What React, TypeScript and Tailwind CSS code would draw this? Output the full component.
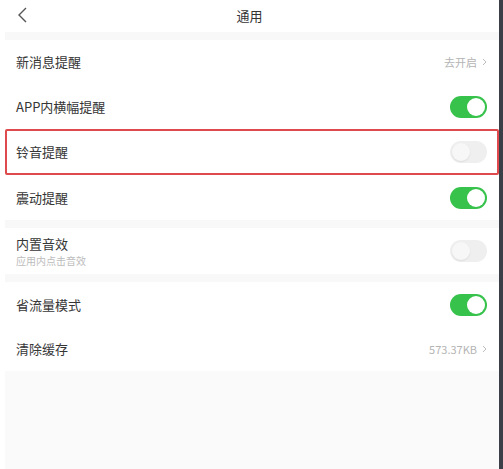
const font = "font-['Noto_Sans_CJK_SC','Noto_Sans',sans-serif]";

type RowProps = {
  label: string;
  sub?: string;
  right?: React.ReactNode;
  className?: string;
};

const Toggle = ({ on }: { on: boolean }) =>
  on ? (
    <div className="w-[37px] h-[22px] rounded-full bg-[#36c24b] flex items-center justify-end pr-[2px]">
      <div className="w-[18px] h-[18px] rounded-full bg-white" />
    </div>
  ) : (
    <div className="w-[37px] h-[22px] rounded-full bg-[#efefef] flex items-center pl-[2px]">
      <div className="w-[18px] h-[18px] rounded-full bg-[#f7f7f7] shadow-[0_1px_2px_rgba(0,0,0,0.08)]" />
    </div>
  );

const Link = ({ text }: { text: string }) => (
  <div className="flex items-center gap-[5px] text-[11px] text-[#b4b4b4]">
    <span>{text}</span>
    <svg width="5" height="8" viewBox="0 0 5 8" fill="none">
      <path d="M1 1l3 3-3 3" stroke="#bdbdbd" strokeWidth="1" />
    </svg>
  </div>
);

// padding lives in className so the ringed row can shift it by the border width
const Row = ({ label, sub, right, className }: RowProps) => (
  <div className={`flex items-center justify-between ${className ?? "h-[45px] pl-[11px] pr-[12px]"}`}>
    <div className="flex flex-col">
      <span className="text-[13px] text-[#363636] leading-[18px]">{label}</span>
      {sub && <span className="text-[10px] text-[#bcbcbc] leading-[12px] mt-[2px]">{sub}</span>}
    </div>
    {right}
  </div>
);

const Gap = () => <div className="h-[8px] bg-[#f8f8f8]" />;

const App = () => {
  return (
    <div className={`${font} w-[503px] h-[469px] bg-white flex overflow-hidden`}>
      <div className="flex-1 flex flex-col pl-[5px]">
        {/* header */}
        <div className="h-[32px] flex items-center relative -ml-[5px]">
          <svg className="absolute left-[17px] top-[6px]" width="11" height="18" viewBox="0 0 11 18" fill="none">
            <path d="M9 2L2 9l7 7" stroke="#555" strokeWidth="1.4" />
          </svg>
          <div className="flex-1 text-center text-[13px] text-[#333]">通用</div>
        </div>
        <Gap />

        <Row label="新消息提醒" className="h-[44px] pl-[11px] pr-[12px]" right={<Link text="去开启" />} />
        <Row label="APP内横幅提醒" right={<Toggle on />} />
        <Row
          label="铃音提醒"
          className="h-[46px] border-2 border-[#de4a4e] rounded-[2px] pl-[9px] pr-[10px]"
          right={<Toggle on={false} />}
        />
        <Row label="震动提醒" right={<Toggle on />} />
        <Gap />

        <Row
          label="内置音效"
          sub="应用内点击音效"
          className="h-[46px] pl-[11px] pr-[12px]"
          right={<Toggle on={false} />}
        />
        <Gap />

        <Row label="省流量模式" right={<Toggle on />} />
        <Row label="清除缓存" className="h-[44px] pl-[11px] pr-[12px]" right={<Link text="573.37KB" />} />

        <div className="flex-1 bg-[#fafafa]" />
      </div>
      <div className="w-[4px] bg-[#3b3f48]" />
    </div>
  );
};

export default App;
